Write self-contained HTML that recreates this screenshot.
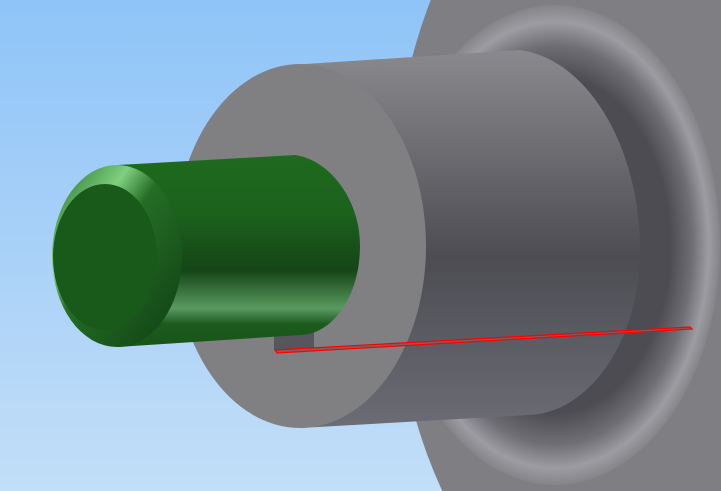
<!DOCTYPE html>
<html><head><style>html,body{margin:0;padding:0;width:721px;height:491px;overflow:hidden}</style></head>
<body>
<svg width="721" height="491" viewBox="0 0 721 491" xmlns="http://www.w3.org/2000/svg" style="display:block">
<defs>
<linearGradient id="sky" x1="0" y1="0" x2="0" y2="1"><stop offset="0" stop-color="#8fc4f8"/><stop offset="1" stop-color="#c2def8"/></linearGradient>
<linearGradient id="body" x1="0" y1="0" x2="0" y2="1"><stop offset="0" stop-color="#8a8a8e"/><stop offset="0.55" stop-color="#4c4c52"/><stop offset="1" stop-color="#6c6c76"/></linearGradient>
<radialGradient id="ring" cx="0.5" cy="0.5" r="0.5"><stop offset="0.7" stop-color="#4c4c52"/><stop offset="0.83" stop-color="#6e6e74"/><stop offset="0.93" stop-color="#9c9ca2"/><stop offset="1" stop-color="#858589"/></radialGradient>
<linearGradient id="green" x1="0" y1="0" x2="0" y2="1"><stop offset="0" stop-color="#1f6a1f"/><stop offset="0.3" stop-color="#1c621d"/><stop offset="0.6" stop-color="#154517"/><stop offset="0.8" stop-color="#5a9a60"/><stop offset="0.88" stop-color="#1c5a1e"/><stop offset="1" stop-color="#185518"/></linearGradient>
<linearGradient id="cham" x1="0" y1="0" x2="1" y2="1"><stop offset="0" stop-color="#1e6b1e"/><stop offset="0.3" stop-color="#80d080"/><stop offset="0.45" stop-color="#256e26"/><stop offset="1" stop-color="#0f3e12"/></linearGradient>
</defs>
<rect width="721" height="491" fill="url(#sky)"/>
<rect x="455" y="440" width="30" height="51" fill="#8fa0d0"/>
<line x1="455.5" y1="465" x2="455.5" y2="491" stroke="#e07020" stroke-width="1"/>
<ellipse cx="610" cy="232" rx="220" ry="400" fill="#7f7f83"/>
<ellipse cx="555" cy="245" rx="165" ry="240" fill="url(#ring)"/>
<path d="M290 65 L520 50 C590 60 640 150 640 250 C640 340 590 412 530 415 L300 428 Z" fill="url(#body)"/>
<ellipse cx="300" cy="246" rx="126" ry="182" fill="#808083"/>
<rect x="274" y="330" width="40" height="20" fill="#56565c"/>
<path d="M118 165 L295 155 C330 160 360 200 360 245 C360 300 330 335 300 335 L118 347 Z" fill="url(#green)"/>
<ellipse cx="117" cy="256" rx="65" ry="91" fill="url(#cham)"/>
<ellipse cx="105" cy="257" rx="52" ry="73" fill="#195a1b"/>
<polygon points="275,350 690,327 692,329 277,353" fill="#8a5a5a" stroke="#ff0000" stroke-width="1.2"/>
</svg>
</body></html>
